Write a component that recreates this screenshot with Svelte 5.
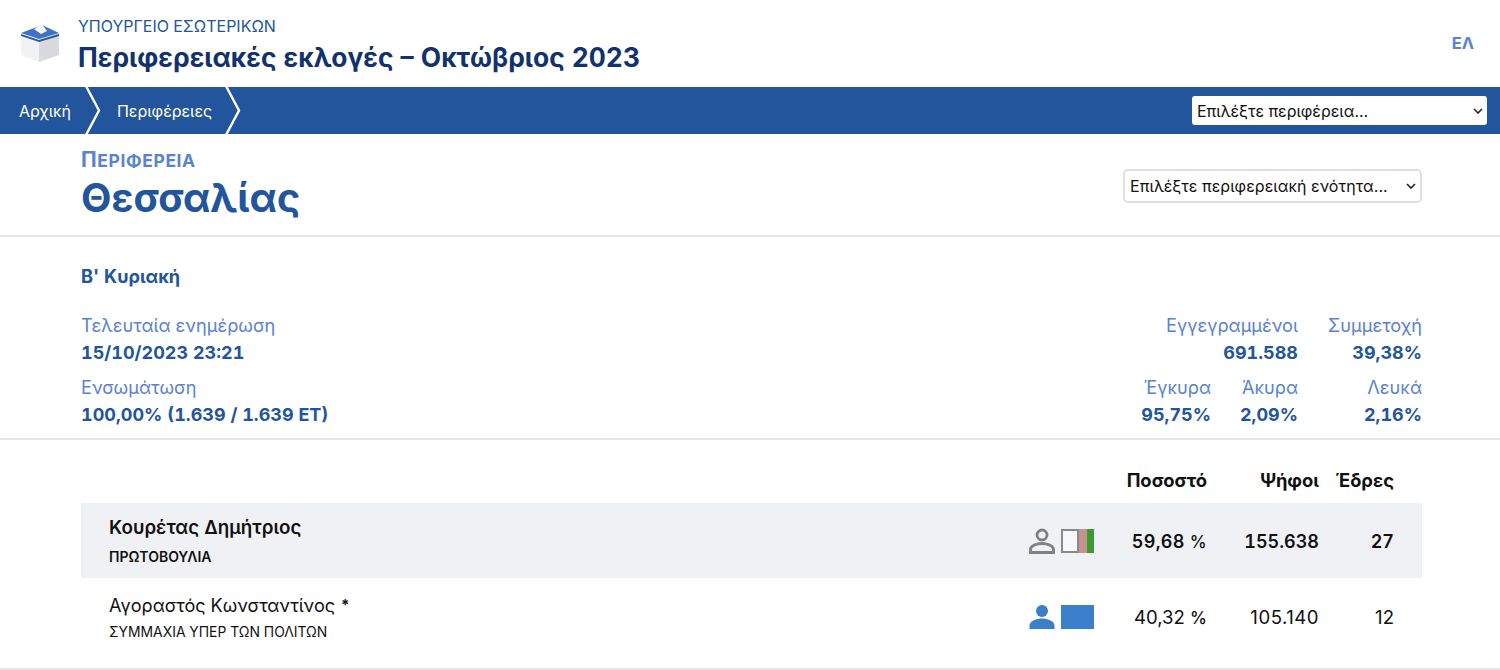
<script lang="ts">
	const candidates = [
		{ name: "Κουρέτας Δημήτριος", party: "ΠΡΩΤΟΒΟΥΛΙΑ", pct: "59,68", votes: "155.638", seats: 27, won: true },
		{ name: "Αγοραστός Κωνσταντίνος", party: "ΣΥΜΜΑΧΙΑ ΥΠΕΡ ΤΩΝ ΠΟΛΙΤΩΝ", pct: "40,32", votes: "105.140", seats: 12, won: false }
	];
</script>

<header class="top">
	<svg class="logo" width="40" height="40" viewBox="0 0 40 40">
		<path d="M1 10 L19 16 V39 L1 32Z" fill="#f1f2f4" />
		<path d="M39 10 L19 16 V39 L39 32Z" fill="#d8dadd" />
		<path d="M1 11 L19 17 V19 L1 13Z" fill="#2b5ca8" />
		<path d="M39 11 L19 17 V19 L39 13Z" fill="#22559c" />
		<path d="M1 10 L22 2 L39 10 L19 16Z" fill="#3f72c6" />
		<path d="M14 6 L22 1 L27 8 L21 11Z" fill="#f4f5f7" />
	</svg>
	<div class="titles">
		<div class="ministry">ΥΠΟΥΡΓΕΙΟ ΕΣΩΤΕΡΙΚΩΝ</div>
		<div class="title">Περιφερειακές εκλογές – Οκτώβριος 2023</div>
	</div>
	<div class="lang">ΕΛ</div>
</header>

<nav class="crumbs">
	<a href="#top" class="crumb first">Αρχική</a>
	<svg class="sep" width="16" height="47" viewBox="0 0 16 47"><path d="M1 -1 L14 23.5 L1 48" fill="none" stroke="#fff" stroke-width="2.4" /></svg>
	<a href="#top" class="crumb">Περιφέρειες</a>
	<svg class="sep" width="16" height="47" viewBox="0 0 16 47"><path d="M1 -1 L14 23.5 L1 48" fill="none" stroke="#fff" stroke-width="2.4" /></svg>
	<div class="select-wrap nav-select">
		<select><option>Επιλέξτε περιφέρεια...</option></select>
		<svg width="10" height="6" viewBox="0 0 10 6"><path d="M1 1 L5 5 L9 1" fill="none" stroke="#222" stroke-width="1.6" /></svg>
	</div>
</nav>

<section class="region">
	<div>
		<div class="kicker"><span>Π</span>ΕΡΙΦΕΡΕΙΑ</div>
		<h1>Θεσσαλίας</h1>
	</div>
	<div class="select-wrap unit-select">
		<select><option>Επιλέξτε περιφερειακή ενότητα...</option></select>
		<svg width="10" height="6" viewBox="0 0 10 6"><path d="M1 1 L5 5 L9 1" fill="none" stroke="#222" stroke-width="1.6" /></svg>
	</div>
</section>

<section class="stats">
	<div class="round">Β' Κυριακή</div>
	<div class="stat-rows">
		<div class="stat-row">
			<div class="stat"><span>Τελευταία ενημέρωση</span><b>15/10/2023 23:21</b></div>
			<div class="stat-right">
				<div class="stat r"><span>Εγγεγραμμένοι</span><b>691.588</b></div>
				<div class="stat r c3"><span>Συμμετοχή</span><b>39,38%</b></div>
			</div>
		</div>
		<div class="stat-row">
			<div class="stat"><span>Ενσωμάτωση</span><b>100,00% (1.639 / 1.639 ΕΤ)</b></div>
			<div class="stat-right">
				<div class="stat r c1"><span>Έγκυρα</span><b>95,75%</b></div>
				<div class="stat r c2"><span>Άκυρα</span><b>2,09%</b></div>
				<div class="stat r c3"><span>Λευκά</span><b>2,16%</b></div>
			</div>
		</div>
	</div>
</section>

<section class="results">
	<div class="row head">
		<div class="who"></div>
		<div class="num pct">Ποσοστό</div>
		<div class="num votes">Ψήφοι</div>
		<div class="num seats">Έδρες</div>
	</div>
	{#each candidates as c}
		<div class="row cand" class:won={c.won}>
			<div class="who">
				<div class="name">{c.name}{#if !c.won}<em>*</em>{/if}</div>
				<div class="party">{c.party}</div>
			</div>
			{#if c.won}
				<svg class="person" width="26" height="26" viewBox="0 0 26 26">
					<circle cx="13" cy="7" r="5" fill="none" stroke="#808080" stroke-width="2.8" />
					<path d="M1.5 24.5 V21.5 C1.5 17.5 8 15.5 13 15.5 C18 15.5 24.5 17.5 24.5 21.5 V24.5Z" fill="none" stroke="#808080" stroke-width="2.8" />
				</svg>
				<div class="seatbar outline">
					<i class="blank"></i><i class="pink"></i><i class="green"></i>
				</div>
			{:else}
				<svg class="person" width="26" height="26" viewBox="0 0 26 26">
					<circle cx="13" cy="7" r="6" fill="#3a7fc9" />
					<path d="M0.5 25 V21.5 C0.5 17 8 14.5 13 14.5 C18 14.5 25.5 17 25.5 21.5 V25Z" fill="#3a7fc9" />
				</svg>
				<div class="seatbar solid"></div>
			{/if}
			<div class="num pct">{c.pct} <small>%</small></div>
			<div class="num votes">{c.votes}</div>
			<div class="num seats">{c.seats}</div>
		</div>
	{/each}
</section>

<style>
	:global(body) {
		margin: 0;
		background: #fff;
		font-family: Inter, "Noto Sans", sans-serif;
		font-feature-settings: "tnum";
	}

	.top {
		display: flex;
		align-items: center;
		height: 87px;
		box-sizing: border-box;
		padding: 0 26px 0 20px;
		color: #12326e;
	}

	.logo {
		margin-right: 18px;
		flex: none;
		margin-top: -2px;
	}

	.titles {
		flex: 1;
		margin-top: 5px;
	}

	.ministry {
		font-size: 16px;
		line-height: 18px;
		color: #22559c;
	}

	.title {
		font-size: 26.4px;
		font-weight: 700;
		line-height: 36px;
		margin-top: 4px;
		color: #12326e;
	}

	.lang {
		color: #5b82d1;
		font-weight: 700;
		font-size: 16.5px;
		margin-top: -2px;
	}

	.crumbs {
		display: flex;
		align-items: center;
		height: 47px;
		background: #22559c;
		color: #fff;
		font-size: 16px;
		overflow: hidden;
	}

	.crumb {
		color: #fff;
		text-decoration: none;
	}

	.crumb.first {
		margin-left: 19px;
		margin-right: 14px;
	}

	.crumbs .sep + .crumb {
		margin-left: 16px;
		margin-right: 13px;
	}

	.select-wrap {
		position: relative;
		display: block;
	}

	.select-wrap svg {
		position: absolute;
		right: 4px;
		top: 50%;
		margin-top: -3px;
		pointer-events: none;
	}

	select {
		appearance: none;
		display: block;
		width: 100%;
		height: 100%;
		box-sizing: border-box;
		background: #fff;
		color: #111;
		font-family: inherit;
		font-size: 16px;
		padding: 0 0 0 5px;
		margin: 0;
		outline: none;
	}

	.nav-select {
		margin-left: auto;
		margin-right: 13px;
		width: 295px;
		height: 29px;
	}

	.nav-select select {
		border: none;
		border-radius: 3px;
	}

	.unit-select {
		width: 299px;
		height: 34px;
		margin-top: 2px;
	}

	.unit-select svg {
		right: 6px;
	}

	.unit-select select {
		border: 2px solid #dde1e6;
		border-radius: 5px;
		letter-spacing: 0.06px;
	}

	.region {
		display: flex;
		justify-content: space-between;
		align-items: center;
		height: 103px;
		box-sizing: border-box;
		padding: 0 78px 0 81px;
		border-bottom: 2px solid #e4e6e9;
	}

	.kicker {
		color: #5b82d1;
		font-weight: 700;
		font-size: 17.5px;
		line-height: 22px;
		margin-top: 2px;
		letter-spacing: 0.6px;
	}

	.kicker span {
		font-size: 21px;
	}

	h1 {
		margin: 0;
		color: #22559c;
		font-size: 39.5px;
		font-weight: 700;
		line-height: 50px;
		margin-top: 1px;
	}

	.stats {
		height: 203px;
		box-sizing: border-box;
		padding: 28px 78px 0 81px;
		border-bottom: 2px solid #e4e6e9;
		color: #22559c;
	}

	.round {
		font-weight: 700;
		font-size: 18.2px;
		line-height: 22px;
	}

	.stat-rows {
		margin-top: 25px;
		display: flex;
		flex-direction: column;
		gap: 8px;
	}

	.stat-row {
		display: flex;
		justify-content: space-between;
	}

	.stat-right {
		display: flex;
		justify-content: flex-end;
	}

	.stat {
		display: flex;
		flex-direction: column;
		font-size: 18.2px;
		line-height: 27px;
	}

	.stat span {
		color: #5b82d1;
	}

	.stat b {
		font-weight: 700;
		font-size: 18px;
	}

	.stat.r {
		text-align: right;
	}

	.c1 {
		width: 100px;
	}

	.c2 {
		width: 87px;
	}

	.c3 {
		width: 124px;
	}

	.results {
		padding: 23px 78px 0 81px;
		color: #111;
		border-bottom: 2px solid #e4e6e9;
		height: 230px;
		box-sizing: border-box;
	}

	.row {
		display: flex;
		align-items: center;
		padding: 0 28px;
	}

	.who {
		flex: 1;
	}

	.num {
		text-align: right;
		flex: none;
		font-size: 18px;
	}

	.pct {
		width: 113px;
	}

	.votes {
		width: 112px;
	}

	.seats {
		width: 75px;
	}

	.head {
		height: 34px;
		margin-bottom: 6px;
	}

	.head .num {
		font-weight: 700;
		font-size: 18.4px;
	}

	.cand {
		height: 75px;
		padding-top: 1px;
		font-feature-settings: "tnum" 0;
	}

	.cand .num {
		font-size: 18.6px;
	}

	.cand .votes {
		letter-spacing: 0.5px;
	}

	.cand.won {
		background: #eff1f4;
		font-weight: 600;
		padding-top: 0;
		padding-bottom: 0;
		height: 75px;
		font-feature-settings: "tnum";
	}

	.cand.won .num {
		font-size: 18px;
		position: relative;
		top: 1px;
		letter-spacing: 0;
	}

	.cand.won .pct {
		letter-spacing: 0.3px;
	}

	.name {
		font-size: 18.1px;
		line-height: 24px;
	}

	.won .name {
		font-size: 18.8px;
	}

	.name em {
		font-style: normal;
		font-weight: 700;
		font-size: 15px;
		margin-left: 6px;
		vertical-align: 2px;
	}

	.party {
		font-size: 13.9px;
		line-height: 18px;
		margin-top: 6px;
	}

	.won .party {
		font-size: 14px;
		margin-top: 8px;
	}

	.person {
		margin-right: 6px;
		flex: none;
	}

	.seatbar {
		width: 33px;
		height: 24px;
		box-sizing: border-box;
		flex: none;
		display: flex;
	}

	.seatbar.solid {
		background: #3a7fc9;
	}

	.seatbar i {
		display: block;
		height: 100%;
	}

	.blank {
		width: 18px;
		box-sizing: border-box;
		border: 2px solid #8a8a8a;
		background: #f7f8f9;
	}

	.pink {
		width: 8px;
		background: #c49391;
	}

	.green {
		width: 7px;
		background: #3f9a35;
	}

	small {
		font-size: 17px;
		font-weight: 500;
	}
</style>
